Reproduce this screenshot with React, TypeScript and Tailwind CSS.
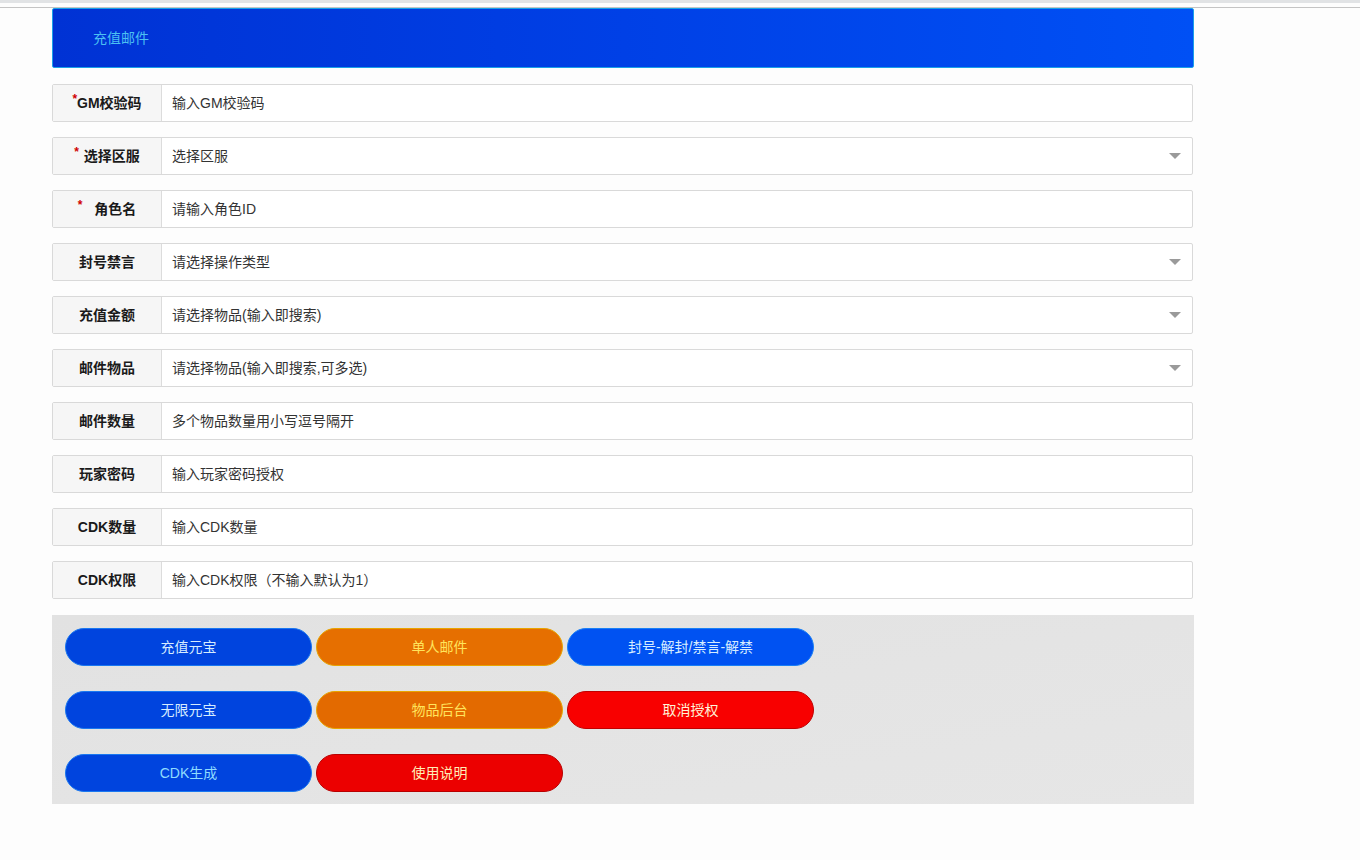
import React from "react";

const font = { fontFamily: '"Liberation Sans", "Noto Sans CJK SC", sans-serif' };

type Row = { label: React.ReactNode; placeholder: string; select?: boolean };

const Star = () => <span className="text-[#d00000] text-[12px] relative -top-[5px]">*</span>;

const rows: Row[] = [
  { label: <><Star />GM校验码</>, placeholder: "输入GM校验码" },
  { label: <><Star /><span className="ml-[5px]">选择区服</span></>, placeholder: "选择区服", select: true },
  { label: <><Star /><span className="ml-[12px]">角色名</span></>, placeholder: "请输入角色ID" },
  { label: "封号禁言", placeholder: "请选择操作类型", select: true },
  { label: "充值金额", placeholder: "请选择物品(输入即搜索)", select: true },
  { label: "邮件物品", placeholder: "请选择物品(输入即搜索,可多选)", select: true },
  { label: "邮件数量", placeholder: "多个物品数量用小写逗号隔开" },
  { label: "玩家密码", placeholder: "输入玩家密码授权" },
  { label: "CDK数量", placeholder: "输入CDK数量" },
  { label: "CDK权限", placeholder: "输入CDK权限（不输入默认为1）" },
];

function FieldRow({ row }: { row: Row }) {
  return (
    <div className="flex h-[38px] border border-[#d9d9d9] rounded-[2px] bg-white">
      <div className="w-[109px] shrink-0 flex items-center justify-center bg-[#f6f6f6] border-r border-[#dcdcdc] text-[14px] font-bold text-[#1a1a1a]">
        <span>{row.label}</span>
      </div>
      <div className="flex-1 flex items-center justify-between pl-[10px] pr-[11px] text-[14px] text-[#333]">
        <span>{row.placeholder}</span>
        {row.select && (
          <svg width="12" height="6" viewBox="0 0 12 6">
            <polygon points="0,0 12,0 6,6" fill="#9a9a9a" />
          </svg>
        )}
      </div>
    </div>
  );
}

type Btn = { text: string; cls: string };

const buttons: Btn[][] = [
  [
    { text: "充值元宝", cls: "bg-[#0044de] text-[#d6ecff] border-[#1a78f0]" },
    { text: "单人邮件", cls: "bg-[#e66f00] text-[#ffe45c] border-[#e8a400]" },
    { text: "封号-解封/禁言-解禁", cls: "bg-[#0052f2] text-[#d6ecff] border-[#1a80f5]" },
  ],
  [
    { text: "无限元宝", cls: "bg-[#0044de] text-[#d6ecff] border-[#1a78f0]" },
    { text: "物品后台", cls: "bg-[#e36a00] text-[#ffe45c] border-[#e8a400]" },
    { text: "取消授权", cls: "bg-[#f80000] text-[#fff3d8] border-[#c00000]" },
  ],
  [
    { text: "CDK生成", cls: "bg-[#0044de] text-[#8fdcff] border-[#1a78f0]" },
    { text: "使用说明", cls: "bg-[#ec0000] text-[#ffeeb8] border-[#b80000]" },
  ],
];

export default function App() {
  return (
    <div className="min-h-[860px] bg-[#fdfdfd]" style={font}>
      <div className="h-[3px] bg-[#e1e3e5]" />
      <div className="h-[4px] bg-[#fdfdfd]" />
      <div className="h-px bg-[#c4c4c4]" />
      <div className="ml-[52px] w-[1142px]">
        <div className="h-[60px] flex items-center pl-[40px] rounded-[2px] border border-[#1aa0e8] bg-gradient-to-r from-[#0032d4] via-[#0040e6] to-[#0050f5] text-[14px] text-[#4cc0f2]">
          充值邮件
        </div>
        <div className="mt-[16px] pr-px flex flex-col gap-[15px]">
          {rows.map((r, i) => (
            <FieldRow key={i} row={r} />
          ))}
        </div>
        <div className="mt-[16px] bg-gradient-to-br from-[#e2e2e2] via-[#e4e4e4] to-[#e6e6e6] pt-[13px] pb-[12px] pl-[13px] flex flex-col gap-[25px]">
          {buttons.map((line, i) => (
            <div key={i} className="flex gap-[4px]">
              {line.map((b) => (
                <div
                  key={b.text}
                  className={`w-[247px] h-[38px] rounded-full border flex items-center justify-center text-[14px] ${b.cls}`}
                >
                  {b.text}
                </div>
              ))}
            </div>
          ))}
        </div>
      </div>
    </div>
  );
}
